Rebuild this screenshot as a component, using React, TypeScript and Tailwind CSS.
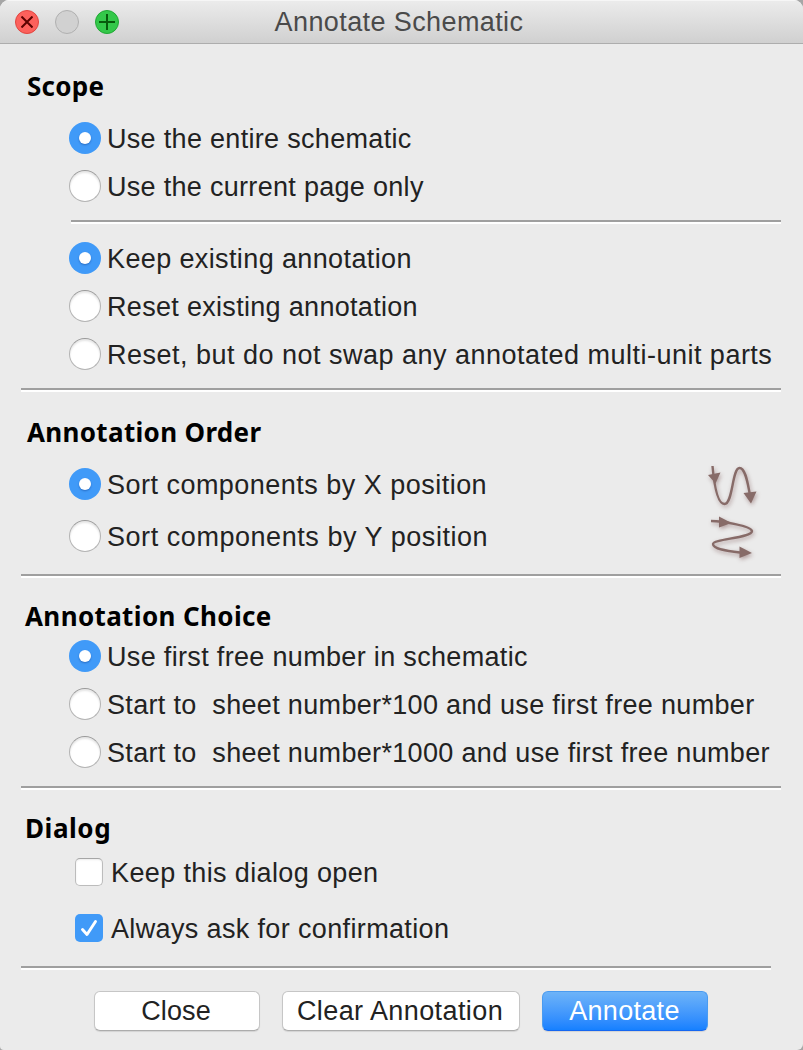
import type { ReactNode } from "react";

function Heading({ children, className = "" }: { children: ReactNode; className?: string }) {
  return (
    <h2 className={`h-8 whitespace-pre font-['Noto_Sans',sans-serif] text-[26px] leading-[30px] font-bold text-black ${className}`}>
      {children}
    </h2>
  );
}

function Separator({ className = "" }: { className?: string }) {
  return <div className={`h-1 shrink-0 border-t-2 border-b-2 border-t-[#9f9f9f] border-b-white ${className}`} />;
}

function Radio({ checked = false, className = "", children }: { checked?: boolean; className?: string; children: ReactNode }) {
  return (
    <label className="flex h-8 items-center gap-1.5">
      {checked ? (
        <span className="flex size-8 shrink-0 items-center justify-center rounded-full bg-[#409af8]">
          <span className="size-3 rounded-full bg-white shadow-[0_1px_2px_rgba(0,40,120,0.4)]" />
        </span>
      ) : (
        <span className="size-8 shrink-0 rounded-full border border-[#b4b4b4] border-t-[#999999] bg-white shadow-[inset_0_2px_2px_rgba(0,0,0,0.1)]" />
      )}
      <span className={`pt-px whitespace-pre leading-8 ${className}`}>{children}</span>
    </label>
  );
}

function SortIcon({ vertical = false }: { vertical?: boolean }) {
  return (
    <svg className="h-12 w-[60px] overflow-visible drop-shadow-[1px_2px_2px_rgba(90,40,40,0.4)]" viewBox="0 0 60 48" fill="none" stroke="#876b68" strokeWidth="2.4">
      {vertical ? (
        <>
          <path d="M7 7C18 7 47 12 48 17C48 24 9 25 9 30C9 35 23 37 36 38.5" />
          <path d="M15 2.5L27.5 9L15 13.5ZM35.5 32.5L48 39L35.5 44Z" fill="#876b68" stroke="none" />
        </>
      ) : (
        <>
          <path d="M8.5 5C10 22 13 43 20.5 43C29 43 28 7 35.5 7C42 7 44 25 46 34" />
          <path d="M4 14L16.5 11.5L11.5 22.5ZM39.5 32L52.5 30.5L47 42.5Z" fill="#876b68" stroke="none" />
        </>
      )}
    </svg>
  );
}

export default function App() {
  return (
    <div className="h-[1050px] w-[803px] overflow-hidden bg-[#a6a6a6] font-['Liberation_Sans',Arial,sans-serif] text-[27px] text-[#222222]">
      <div className="flex h-full flex-col overflow-hidden rounded-t-[9px] rounded-br-[6px] rounded-bl-[4px] bg-[#ebebeb]">
        <header className="grid h-11 shrink-0 grid-cols-[128px_1fr_133px] items-center border-b border-[#adadad] bg-linear-to-b from-[#ececec] to-[#d0d0d0] shadow-[inset_0_1px_0_#f6f6f6]">
          <div className="flex gap-4 pl-[15px]">
            <span className="flex size-6 items-center justify-center rounded-full border border-[#e2453f] bg-[#fc615c]">
              <svg className="size-3" viewBox="0 0 12 12" stroke="#5b0300" strokeWidth="2"><path d="M.5.5l11 11M11.5.5l-11 11" /></svg>
            </span>
            <span className="size-6 rounded-full border border-[#b0b0b0] bg-[#d1d1d1]" />
            <span className="flex size-6 items-center justify-center rounded-full border border-[#20a834] bg-[#34c84a]">
              <svg className="size-4" viewBox="0 0 16 16" stroke="#075b0c" strokeWidth="2"><path d="M0 8h16M8 0v16" /></svg>
            </span>
          </div>
          <h1 className="pt-0.5 text-center tracking-[0.4px] whitespace-pre text-[#4a4a4a]">Annotate Schematic</h1>
        </header>

        <main className="flex flex-1 flex-col pl-[21px]">
          <section>
            <Heading className="mt-[27px] ml-[6px] tracking-[0.25px]">Scope</Heading>
            <div className="mt-[19px] ml-12 flex flex-col gap-4">
              <Radio checked className="tracking-[0.31px]">Use the entire schematic</Radio>
              <Radio className="tracking-[0.3px]">Use the current page only</Radio>
            </div>
            <Separator className="mt-[18px] ml-[50px] w-[710px]" />
            <div className="mt-[18px] ml-12 flex flex-col gap-4">
              <Radio checked className="tracking-[0.38px]">Keep existing annotation</Radio>
              <Radio className="tracking-[0.31px]">Reset existing annotation</Radio>
              <Radio className="tracking-[0.49px]">Reset, but do not swap any annotated multi-unit parts</Radio>
            </div>
          </section>
          <Separator className="mt-[18px] w-[760px]" />

          <section>
            <Heading className="mt-[25px] ml-[6px] tracking-[0.33px]">Annotation Order</Heading>
            <div className="mt-[19px] ml-12 flex w-[695px] flex-col">
              <div className="flex h-[42px] items-start justify-between">
                <Radio checked className="tracking-[0.48px]">Sort components by X position</Radio>
                <div className="-mt-[7px] h-0"><SortIcon /></div>
              </div>
              <div className="flex h-[42px] items-end justify-between">
                <Radio className="tracking-[0.55px]">Sort components by Y position</Radio>
                <div className="h-[38px]"><SortIcon vertical /></div>
              </div>
            </div>
          </section>
          <Separator className="mt-[22px] w-[760px]" />

          <section>
            <Heading className="mt-[23px] ml-1 tracking-[0.37px]">Annotation Choice</Heading>
            <div className="mt-[7px] ml-12 flex flex-col gap-4">
              <Radio checked className="tracking-[0.33px]">Use first free number in schematic</Radio>
              <Radio className="tracking-[0.33px]">Start to  sheet number*100 and use first free number</Radio>
              <Radio className="tracking-[0.33px]">Start to  sheet number*1000 and use first free number</Radio>
            </div>
          </section>
          <Separator className="mt-[18px] w-[760px]" />

          <section>
            <Heading className="mt-[23px] ml-1 tracking-[0.55px]">Dialog</Heading>
            <div className="mt-[13px] ml-[54px] flex flex-col gap-7">
              <label className="flex h-7 items-center gap-2">
                <span className="size-7 rounded-[5px] border border-[#bcbcbc] border-t-[#a6a6a6] bg-white shadow-[inset_0_1px_2px_rgba(0,0,0,0.08)]" />
                <span className="pt-0.5 tracking-[0.37px] whitespace-pre">Keep this dialog open</span>
              </label>
              <label className="flex h-7 items-center gap-2">
                <span className="flex size-7 items-center justify-center rounded-[5px] bg-[#409af8]">
                  <svg className="size-7" viewBox="0 0 28 28" fill="none" stroke="white" strokeWidth="2.9" strokeLinecap="round" strokeLinejoin="round"><path d="M7.5 15.5l4.5 5L20.5 7.5" /></svg>
                </span>
                <span className="pt-0.5 tracking-[0.36px] whitespace-pre">Always ask for confirmation</span>
              </label>
            </div>
          </section>
          <Separator className="mt-6 w-[750px]" />

          <footer className="mt-[21px] ml-[73px] flex gap-[22px]">
            <button className="h-10 w-[166px] rounded-md border border-[#c6c6c6] border-b-[#acacac] bg-white pr-0.5 leading-[38px] tracking-[0.1px] whitespace-pre shadow-[0_1px_1px_rgba(0,0,0,0.1)]">Close</button>
            <button className="h-10 w-[238px] rounded-md border border-[#c6c6c6] border-b-[#acacac] bg-white pr-0.5 leading-[38px] tracking-[0.41px] whitespace-pre shadow-[0_1px_1px_rgba(0,0,0,0.1)]">Clear Annotation</button>
            <button className="h-10 w-[166px] rounded-md border border-[#4a9bf0] border-b-[#1566f0] bg-linear-to-b from-[#6db3f8] to-[#1580ff] pr-px leading-[38px] tracking-[0.3px] whitespace-pre text-white shadow-[0_1px_1px_rgba(0,0,0,0.1)]">Annotate</button>
          </footer>
        </main>
      </div>
    </div>
  );
}
